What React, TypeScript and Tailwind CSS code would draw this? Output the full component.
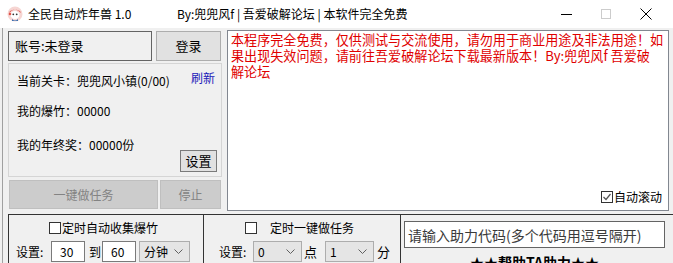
const F = "font-['Noto_Sans_CJK_SC',sans-serif]";

function AppIcon() {
  return (
    <svg width="16" height="16" viewBox="0 0 16 16">
      <circle cx="8" cy="8" r="7.5" fill="#f6d6d3" />
      <path d="M2 7 Q8 0 14 7 L13 5 Q8 2 3 5 Z" fill="#e0524a" />
      <ellipse cx="8" cy="9" rx="4.5" ry="4" fill="#fff" />
      <circle cx="6.3" cy="8.3" r="0.9" fill="#333" />
      <circle cx="9.7" cy="8.3" r="0.9" fill="#333" />
      <path d="M5 13 Q8 16 11 13 L11 15 L5 15 Z" fill="#3a6fb0" />
      <circle cx="3" cy="8" r="1.3" fill="#e0524a" />
    </svg>
  );
}

function Chevron() {
  return (
    <svg width="9" height="6" viewBox="0 0 9 6">
      <polyline points="0.5,0.5 4.5,4.5 8.5,0.5" fill="none" stroke="#606060" strokeWidth="1" />
    </svg>
  );
}

function Box({ checked = false }: { checked?: boolean }) {
  return (
    <span className="w-[12px] h-[12px] border border-[#333] bg-white flex items-center justify-center shrink-0">
      {checked && (
        <svg width="10" height="10" viewBox="0 0 10 10">
          <polyline points="1.5,5 4,7.5 8.5,2" fill="none" stroke="#555" strokeWidth="1.2" />
        </svg>
      )}
    </span>
  );
}

function Select({ value, w }: { value: string; w: string }) {
  return (
    <span className={`${w} h-[21px] border border-[#adadad] bg-[#e5e5e5] flex items-center justify-between pl-[4px] pr-[6px] shrink-0`}>
      <span>{value}</span>
      <Chevron />
    </span>
  );
}

function TitleBar() {
  return (
    <div className="h-[28px] bg-white flex items-center shrink-0">
      <span className="ml-[7px] mr-[5px] flex items-center">
        <AppIcon />
      </span>
      <span className="text-[12px] w-[149px]">全民自动炸年兽 1.0</span>
      <span className="text-[12px]">By:兜兜风f | 吾爱破解论坛 | 本软件完全免费</span>
      <div className="ml-auto mr-[7px] flex items-center h-full">
        <span className="w-[40px] flex justify-center">
          <span className="w-[11px] h-px bg-black" />
        </span>
        <span className="w-[40px] flex justify-center">
          <span className="w-[10px] h-[10px] border border-[#cccccc]" />
        </span>
        <span className="w-[40px] flex justify-center">
          <svg width="12" height="12" viewBox="0 0 12 12">
            <path d="M0.5 0.5 L11.5 11.5 M11.5 0.5 L0.5 11.5" stroke="#000" strokeWidth="1" />
          </svg>
        </span>
      </div>
    </div>
  );
}

function LeftPanel() {
  return (
    <div className="w-[214px] flex flex-col shrink-0">
      <div className="flex mt-[1px] h-[30px] gap-[4px]">
        <div className="w-[144px] border border-[#646464] flex items-center pl-[6px] text-[13px]">账号:未登录</div>
        <div className="w-[65px] border border-[#adadad] bg-[#e1e1e1] flex items-center justify-center text-[13px]">登录</div>
      </div>
      <div className="mt-[2px] h-[114px] border border-[#d5d5d5] relative pl-[8px] pt-[8px] flex flex-col">
        <div className="h-[18px] flex items-center">当前关卡：兜兜风小镇(0/00)</div>
        <span className="absolute left-[182px] top-[6px] text-[#1a1ab8] text-[12px]">刷新</span>
        <div className="h-[18px] mt-[12px] flex items-center">我的爆竹：00000</div>
        <div className="h-[18px] mt-[16px] flex items-center">我的年终奖：00000份</div>
        <div className="flex justify-end pr-[4px] mt-[-4px]">
          <span className="w-[37px] h-[22px] border border-[#7a7a7a] bg-[#e1e1e1] flex items-center justify-center text-[13px]">设置</span>
        </div>
      </div>
      <div className="flex mt-[3px] h-[29px] pl-[1px] gap-[2px]">
        <span className="w-[149px] bg-[#cccccc] border border-[#bfbfbf] text-[#838383] flex items-center justify-center">一键做任务</span>
        <span className="w-[61px] bg-[#cccccc] border border-[#bfbfbf] text-[#838383] flex items-center justify-center">停止</span>
      </div>
    </div>
  );
}

function Log() {
  return (
    <div className="w-[442px] h-[181px] border border-[#828790] bg-white relative shrink-0 pl-[3px] pt-[1px]">
      <div className="text-[#e00000] text-[13.1px] leading-[16px] whitespace-nowrap">
        <div>本程序完全免费，仅供测试与交流使用，请勿用于商业用途及非法用途！如</div>
        <div>果出现失效问题，请前往吾爱破解论坛下载最新版本！By:兜兜风f 吾爱破</div>
        <div>解论坛</div>
      </div>
      <div className="absolute right-[6px] bottom-[5px] flex items-center gap-[1px]">
        <Box checked />
        <span>自动滚动</span>
      </div>
    </div>
  );
}

function Bottom() {
  return (
    <div className="flex mt-[3px] ml-[5px] border-t border-l border-[#333] h-[60px]">
      <div className="w-[195px] border-r border-[#333] flex flex-col shrink-0">
        <div className="flex items-center pl-[40px] mt-[7px] h-[12px] gap-[1px]">
          <Box />
          <span>定时自动收集爆竹</span>
        </div>
        <div className="flex items-center mt-[7px] h-[21px]">
          <span className="pl-[7px] w-[42px]">设置:</span>
          <span className="w-[34px] h-[21px] border border-[#7a7a7a] bg-white flex items-center pl-[8px]">30</span>
          <span className="w-[17px] pl-[4px]">到</span>
          <span className="w-[34px] h-[21px] border border-[#7a7a7a] bg-white flex items-center pl-[8px]">60</span>
          <span className="w-[3px]" />
          <Select value="分钟" w="w-[51px]" />
        </div>
      </div>
      <div className="w-[197px] border-r border-[#333] flex flex-col shrink-0">
        <div className="flex items-center pl-[41px] mt-[7px] h-[12px] gap-[13px]">
          <Box />
          <span>定时一键做任务</span>
        </div>
        <div className="flex items-center mt-[7px] h-[21px]">
          <span className="pl-[15px] w-[49px]">设置:</span>
          <Select value="0" w="w-[49px]" />
          <span className="w-[23px] pl-[2px] text-[13px]">点</span>
          <Select value="1" w="w-[49px]" />
          <span className="pl-[3px] text-[13px]">分</span>
        </div>
      </div>
      <div className="flex-1 flex flex-col">
        <div className="ml-[3px] mt-[6px] w-[261px] h-[27px] border border-[#646464] bg-white flex items-center pl-[3px] text-[14px] text-[#3a3a3a] whitespace-nowrap">
          请输入助力代码(多个代码用逗号隔开)
        </div>
        <div className="w-[261px] ml-[3px] mt-[6px] text-center font-bold text-[14px] leading-[16px]">★★帮助TA助力★★</div>
      </div>
    </div>
  );
}

export default function App() {
  return (
    <div className={`w-[673px] h-[263px] overflow-hidden bg-[#f0f0f0] ${F} text-[12px] leading-[16px] text-black flex flex-col`}>
      <TitleBar />
      <div className="flex-1 flex flex-col ml-[2px] border-l border-[#a0a0a0]">
        <div className="flex pt-[2px] pl-[5px] gap-[5px]">
          <LeftPanel />
          <Log />
        </div>
        <Bottom />
      </div>
    </div>
  );
}
